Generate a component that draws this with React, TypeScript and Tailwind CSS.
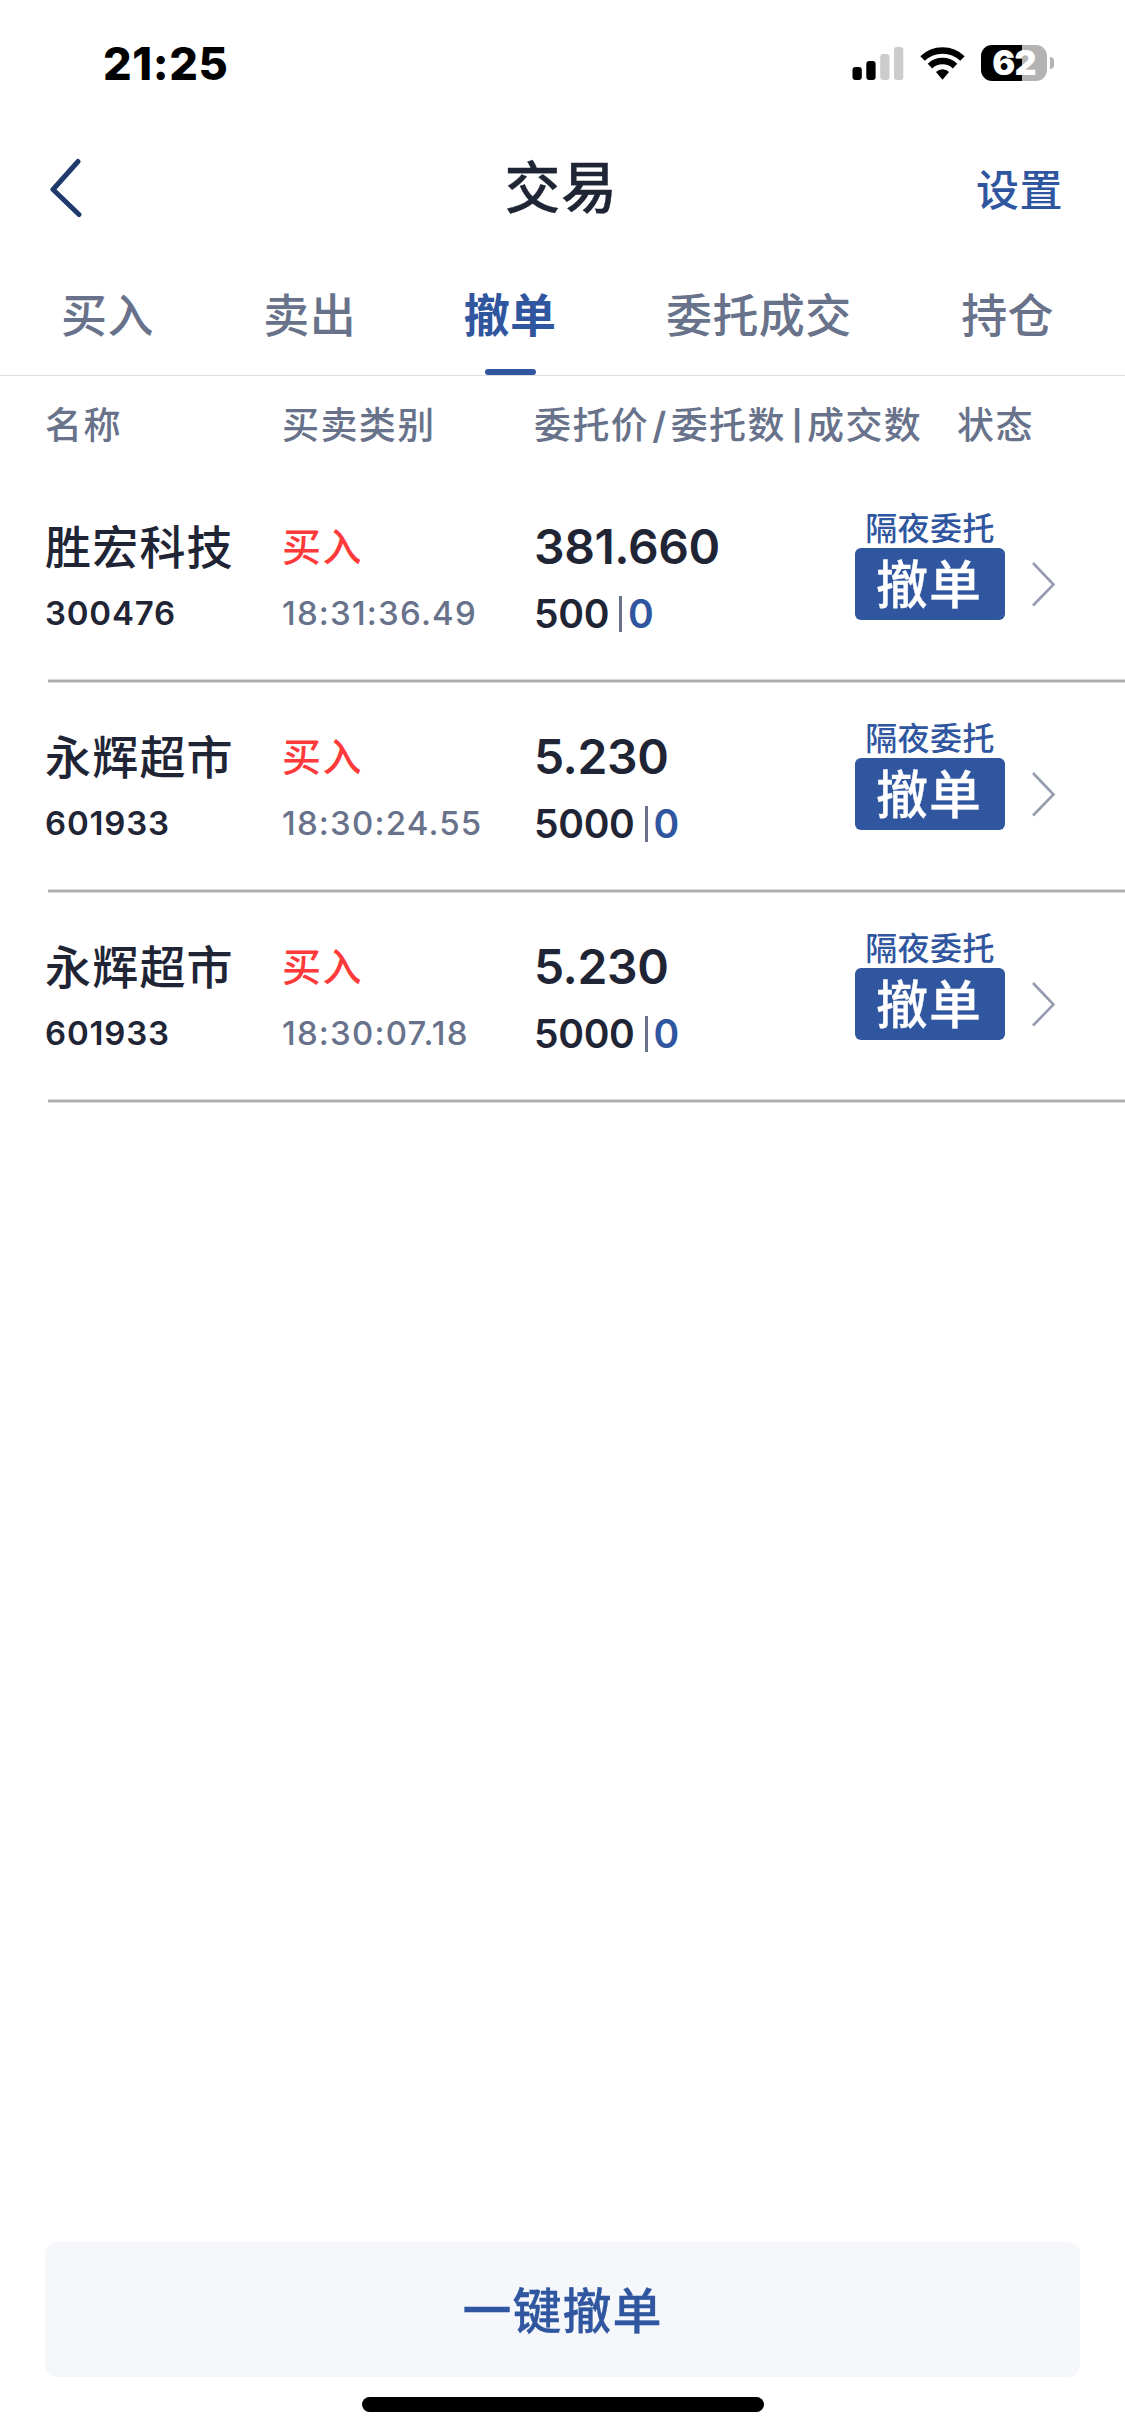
type Order = {
  name: string;
  code: string;
  side: string;
  time: string;
  price: string;
  amount: string;
  filled: string;
};

const orders: Order[] = [
  {
    name: "胜宏科技",
    code: "300476",
    side: "买入",
    time: "18:31:36.49",
    price: "381.660",
    amount: "500",
    filled: "0",
  },
  {
    name: "永辉超市",
    code: "601933",
    side: "买入",
    time: "18:30:24.55",
    price: "5.230",
    amount: "5000",
    filled: "0",
  },
  {
    name: "永辉超市",
    code: "601933",
    side: "买入",
    time: "18:30:07.18",
    price: "5.230",
    amount: "5000",
    filled: "0",
  },
];

function StatusBar() {
  return (
    <div className="flex h-[126px] items-start justify-between pl-[103px] pr-[71px] pt-[42px]">
      <div className="text-[45px] font-extrabold leading-[44px] tracking-[0.6px] text-black">
        21:25
      </div>
      <div className="flex h-[42px] items-center">
        <svg width="52" height="36" viewBox="0 0 52 36">
          <rect x="0.5" y="22" width="9.3" height="13" rx="3" fill="#000" />
          <rect x="14.3" y="16" width="9.3" height="19" rx="3" fill="#000" />
          <rect x="28.2" y="9" width="9.3" height="26" rx="3" fill="#ccc" />
          <rect x="42" y="2" width="9.3" height="33" rx="3" fill="#ccc" />
        </svg>
        <svg
          className="ml-4"
          width="45"
          height="36"
          viewBox="0 0 46 36"
          fill="none"
          stroke="#000"
          strokeWidth="6.6"
        >
          <path d="M2.6 13.4A29.5 29.5 0 0 1 43.4 13.4" />
          <path d="M10.2 21.2A18.5 18.5 0 0 1 35.8 21.2" />
          <path
            d="M16.3 27.2a9.6 9.6 0 0 1 13.4 0L23 35z"
            fill="#000"
            stroke="none"
          />
        </svg>
        <div className="ml-4 flex h-9 w-[66px] items-center justify-center rounded-[11px] bg-[linear-gradient(to_right,#000_41.5px,#b3b3b3_41.5px)] text-[34px] font-black leading-[42px] tracking-[-0.6px] text-white">
          62
        </div>
        <div className="ml-[3px] h-3 w-1 rounded-r-full bg-[#b3b3b3]" />
      </div>
    </div>
  );
}

function NavBar() {
  return (
    <div className="flex h-[124px] items-center justify-between pl-[49px] pr-[62px]">
      <svg
        width="100"
        height="60"
        viewBox="0 0 100 60"
        fill="none"
        stroke="#1f3a6b"
        strokeWidth="5"
        strokeLinecap="round"
        strokeLinejoin="round"
      >
        <path d="M29 3.5L4 31.5L30 56.5" />
      </svg>
      <h1 className="ml-[-3px] text-[56px] font-medium leading-[60px] tracking-[0.5px] text-[#1f2535] [-webkit-text-stroke-width:0.3px]">
        交易
      </h1>
      <div className="pt-[3px] text-[43px] font-medium leading-[60px] tracking-[0.5px] text-[#2f569f]">
        设置
      </div>
    </div>
  );
}

function TabBar() {
  return (
    <div className="flex h-[126px] justify-between border-b border-[#dcdcdc] pl-[61px] pr-[71px] pt-[35px] text-[46px] font-medium leading-[60px] tracking-[0.4px] text-[#68728a]">
      <div>买入</div>
      <div>卖出</div>
      <div className="ml-[-2px] flex flex-col items-center justify-between font-bold text-[#2f569f]">
        撤单
        <div className="h-1.5 w-[51px] rounded-full bg-[#2f569f]" />
      </div>
      <div>委托成交</div>
      <div>持仓</div>
    </div>
  );
}

function TableHead() {
  return (
    <div className="grid h-[97px] grid-cols-[237px_252px_423px_1fr] items-center pl-[45px] pt-[3px] text-[37px] font-medium leading-[60px] tracking-[1.4px] text-[#68728a]">
      <div>名称</div>
      <div>买卖类别</div>
      <div className="flex whitespace-nowrap">
        委托价<span className="mx-[3px] font-semibold">/</span>委托数
        <span className="ml-[6px] mr-[3px] text-[29px] font-bold leading-[60px]">
          |
        </span>
        成交数
      </div>
      <div>状态</div>
    </div>
  );
}

function OrderRow({ order }: { order: Order }) {
  return (
    <div className="pl-12">
      <div className="ml-[-3px] grid h-[206px] grid-cols-[237px_252px_321px_1fr]">
        <div className="pt-11 text-[#1f2535]">
          <div className="text-[46px] font-medium leading-[60px] tracking-[1.2px]">
            {order.name}
          </div>
          <div className="mt-4 text-[33px] font-semibold leading-10 tracking-[0.8px]">
            {order.code}
          </div>
        </div>
        <div className="pt-11">
          <div className="text-[39px] font-medium leading-[60px] tracking-[1.5px] text-[#ff3a3a]">
            {order.side}
          </div>
          <div className="mt-4 text-[33px] font-medium leading-10 tracking-[1.2px] text-[#68728a]">
            {order.time}
          </div>
        </div>
        <div className="pt-11 text-[#1f2535]">
          <div className="text-[48px] font-semibold leading-[60px] tracking-[-0.4px]">
            {order.price}
          </div>
          <div className="mt-[17px] flex items-center text-[39px] font-semibold leading-10 tracking-[-0.3px]">
            {order.amount}
            <div className="ml-2.5 mr-[6px] h-9 w-[3px] bg-[#68728a]" />
            <span className="text-[#2f569f]">{order.filled}</span>
          </div>
        </div>
        <div className="flex pt-[33px]">
          <div className="w-[150px]">
            <div className="h-[42px] text-center text-[32px] font-medium leading-[45px] tracking-[0.4px] text-[#2f569f]">
              隔夜委托
            </div>
            <button className="block h-[72px] w-full rounded-md bg-[#2f569f] pr-0.5 text-[52px] font-medium leading-[75px] tracking-[1px] text-white [-webkit-text-stroke-width:0.3px]">
              撤单
            </button>
          </div>
          <svg
            className="ml-[27px] mt-[55px]"
            width="24"
            height="46"
            viewBox="0 0 24 46"
            fill="none"
            stroke="#949cae"
            strokeWidth="2.6"
          >
            <path d="M1 2L21.5 23.5L1 44.5" />
          </svg>
        </div>
      </div>
      <div className="h-1 border-y border-[#dadadc] bg-[#adadb2]" />
    </div>
  );
}

export default function App() {
  return (
    <div className="flex h-[2436px] w-[1125px] flex-col overflow-hidden bg-white font-['Inter','Noto_Sans_CJK_SC',sans-serif]">
      <StatusBar />
      <NavBar />
      <TabBar />
      <TableHead />
      <div>
        {orders.map((order) => (
          <OrderRow key={order.time} order={order} />
        ))}
      </div>
      {/* Cancel everything */}
      <div className="mt-auto px-[45px]">
        <button className="block h-[135px] w-full rounded-xl bg-[#f5f7fb] text-[49px] font-medium leading-[139px] tracking-[1px] text-[#2f569f] [-webkit-text-stroke-width:0.3px]">
          一键撤单
        </button>
      </div>
      <div className="mx-auto mb-6 mt-5 h-[15px] w-[402px] rounded-full bg-black" />
    </div>
  );
}
